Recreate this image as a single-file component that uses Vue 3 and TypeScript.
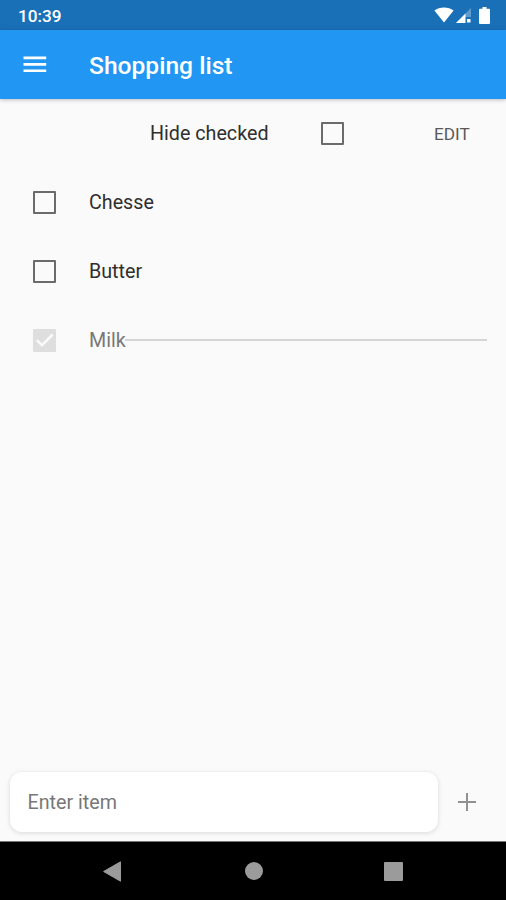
<script setup lang="ts">
import { ref, computed } from 'vue'

interface Item {
  name: string
  checked: boolean
}

const items = ref<Item[]>([
  { name: 'Chesse', checked: false },
  { name: 'Butter', checked: false },
  { name: 'Milk', checked: true },
])
const hideChecked = ref(false)
const draft = ref('')

const visibleItems = computed(() => items.value.filter((i) => !(hideChecked.value && i.checked)))

function addItem() {
  const name = draft.value.trim()
  if (!name) return
  items.value.push({ name, checked: false })
  draft.value = ''
}
</script>

<template>
  <div class="screen">
    <header class="status">
      <span class="clock">10:39</span>
      <div class="indicators">
        <svg class="wifi" viewBox="0 0 20 16"><path d="M10 15.500 .4 3.600C3 1.500 6.400.6 10 .6s7 .9 9.600 3z" fill="#fff" /></svg>
        <svg class="signal" viewBox="0 0 15 15">
          <path d="M0 15 15 0v9H9v6z" fill="#fff" fill-opacity=".3" />
          <path d="M0 15 9.500 5.500V15z" fill="#fff" />
          <path d="M11 11h3.500v3.500H11z" fill="#fff" />
        </svg>
        <svg class="battery" viewBox="0 0 11 17"><path d="M3.500 0h4v1.700H10a1 1 0 0 1 1 1V16a1 1 0 0 1-1 1H1a1 1 0 0 1-1-1V2.700a1 1 0 0 1 1-1h2.500z" fill="#fff" /></svg>
      </div>
    </header>

    <div class="appbar">
      <button class="menu" aria-label="Menu">
        <svg viewBox="0 0 24 17"><path d="M.5.600h22.700v2.700H.5zM.5 7h22.700v2.700H.5zM.5 13.400h22.700v2.700H.5z" fill="#fff" /></svg>
      </button>
      <h1>Shopping list</h1>
    </div>

    <main>
      <div class="tools">
        <span class="hide-label">Hide checked</span>
        <button class="box" role="checkbox" :aria-checked="hideChecked" @click="hideChecked = !hideChecked"></button>
        <button class="edit">EDIT</button>
      </div>
      <ul>
        <li v-for="item in visibleItems" :key="item.name" :class="{ done: item.checked }">
          <button class="box" role="checkbox" :aria-checked="item.checked" @click="item.checked = !item.checked">
            <svg v-if="item.checked" viewBox="0 0 23 23"><path d="M3.800 11.200 9 16.200 19.700 5.500" fill="none" stroke="#fafafa" stroke-width="2.500" /></svg>
          </button>
          <span class="name">{{ item.name }}</span>
          <span v-if="item.checked" class="strike"></span>
        </li>
      </ul>
    </main>

    <form class="entry" @submit.prevent="addItem">
      <input v-model="draft" placeholder="Enter item" />
      <button class="add" aria-label="Add">
        <svg viewBox="0 0 18 18"><path d="M9 0v18M0 9h18" stroke="#919191" stroke-width="2" /></svg>
      </button>
    </form>

    <nav>
      <svg class="back" viewBox="0 0 18 21"><path d="M17.500.8v19.400L.6 10.500z" fill="#9b9b9b" stroke="#9b9b9b" stroke-linejoin="round" /></svg>
      <span class="home"></span>
      <span class="recent"></span>
    </nav>
  </div>
</template>

<style>
body {
  margin: 0;
}
</style>

<style scoped>
.screen {
  display: flex;
  flex-direction: column;
  width: 506px;
  height: 900px;
  overflow: hidden;
  background: #fafafa;
  font-family: Roboto, sans-serif;
  font-size: 19.7px;
  color: #2f2f2f;
}
button {
  padding: 0;
  border: 0;
  background: none;
  font: inherit;
  color: inherit;
}
svg {
  display: block;
}
.status {
  display: flex;
  justify-content: space-between;
  flex: none;
  box-sizing: border-box;
  height: 30px;
  padding: 0 16px 0 18px;
  background: #1a70b7;
  color: #fff;
}
.clock {
  font-size: 17.2px;
  font-weight: 500;
  line-height: 32px;
}
.indicators {
  display: flex;
  align-items: flex-start;
  padding-top: 7px;
}
.wifi {
  width: 20px;
  height: 16px;
}
.signal {
  width: 15px;
  height: 15px;
  margin: 1px 8px 0 2px;
}
.battery {
  width: 11px;
  height: 17px;
}
.appbar {
  display: flex;
  align-items: center;
  flex: none;
  box-sizing: border-box;
  height: 69px;
  padding-left: 23px;
  background: #2196f3;
  color: #fff;
  box-shadow: 0 1px 4px rgba(0, 0, 0, 0.25);
}
.menu svg {
  width: 24px;
  height: 17px;
}
h1 {
  margin: 2px 0 0 42px;
  font-size: 24.6px;
  font-weight: 500;
}
main {
  flex: 1;
}
.tools {
  display: flex;
  align-items: center;
  height: 69px;
  padding-left: 150px;
}
.hide-label {
  width: 171px;
}
.box {
  flex: none;
  box-sizing: border-box;
  width: 23px;
  height: 23px;
  border: 2px solid #6b6b6b;
  border-radius: 1px;
}
.edit {
  margin-left: 90px;
  font-size: 17.2px;
  color: #595959;
}
ul {
  margin: 0;
  padding: 0;
  list-style: none;
}
li {
  display: flex;
  align-items: center;
  height: 69px;
  padding: 0 19px 0 33px;
}
.name {
  margin-left: 33px;
}
.done .box {
  border: 0;
  background: #dedede;
}
.done .name {
  color: #777;
}
.strike {
  flex: 1;
  height: 2px;
  margin: 0 0 1px -1px;
  background: #d5d5d5;
}
.entry {
  display: flex;
  align-items: center;
  flex: none;
  height: 60px;
  padding: 0 29px 9px 10px;
}
.entry input {
  box-sizing: border-box;
  width: 428px;
  height: 60px;
  padding: 0 17.5px;
  border: 0;
  border-radius: 12px;
  outline: 0;
  background: #fff;
  box-shadow: 0 1px 5px rgba(0, 0, 0, 0.14);
  font: inherit;
}
.entry input::placeholder {
  color: #777;
  opacity: 1;
}
.add {
  margin-left: 20px;
}
.add svg {
  width: 18px;
  height: 18px;
}
nav {
  display: flex;
  align-items: center;
  flex: none;
  box-sizing: border-box;
  height: 59px;
  padding-left: 103px;
  border-top: 1px solid #777;
  background: #000;
}
.back {
  width: 18px;
  height: 21px;
}
.home {
  width: 18px;
  height: 18px;
  margin-left: 123.5px;
  border-radius: 50%;
  background: #9b9b9b;
}
.recent {
  width: 19px;
  height: 19px;
  margin-left: 121.5px;
  border-radius: 1px;
  background: #9b9b9b;
}
</style>
